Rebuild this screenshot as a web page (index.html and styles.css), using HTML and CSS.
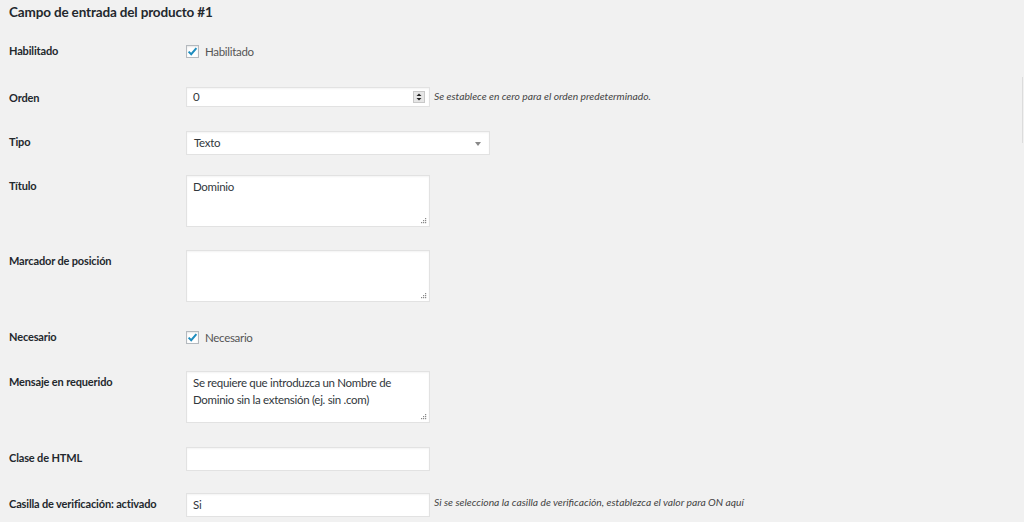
FILE: index.html
```html
<!DOCTYPE html>
<html lang="es">
<head>
<meta charset="utf-8">
<title>Campo de entrada del producto #1</title>
<link rel="stylesheet" href="styles.css">
</head>
<body>
<div class="wrap">
  <h2 class="title">Campo de entrada del producto #1</h2>
  <div class="form">
    <div class="row row-check">
      <div class="label">Habilitado</div>
      <div class="field">
        <span class="checkbox"><svg viewBox="0 0 13 13" width="13" height="13"><path d="M2.6 6.6 L5.2 9.2 L10.4 3.2" fill="none" stroke="#1e8cbe" stroke-width="2"/></svg></span>
        <span class="check-text">Habilitado</span>
      </div>
    </div>
    <div class="row">
      <div class="label">Orden</div>
      <div class="field">
        <div class="input input-number">0<span class="spinner"><svg viewBox="0 0 12 12" width="12" height="12"><rect x="0.5" y="0.5" width="11" height="11" fill="#e6e6e6" stroke="#c8c8c8"/><path d="M3.5 5 L6 2.5 L8.5 5 Z M3.5 7 L6 9.5 L8.5 7 Z" fill="#222"/></svg></span></div>
        <span class="desc">Se establece en cero para el orden predeterminado.</span>
      </div>
    </div>
    <div class="row">
      <div class="label">Tipo</div>
      <div class="field">
        <div class="input select">Texto<span class="arrow"></span></div>
      </div>
    </div>
    <div class="row">
      <div class="label">Título</div>
      <div class="field">
        <div class="input textarea">Dominio<span class="grip"><svg viewBox="0 0 6 6" width="6" height="6"><rect x="4" y="0" width="1.2" height="1.2" fill="#888"/><rect x="2" y="2" width="1.2" height="1.2" fill="#888"/><rect x="4" y="2" width="1.2" height="1.2" fill="#888"/><rect x="0" y="4" width="1.2" height="1.2" fill="#888"/><rect x="2" y="4" width="1.2" height="1.2" fill="#888"/><rect x="4" y="4" width="1.2" height="1.2" fill="#888"/></svg></span></div>
      </div>
    </div>
    <div class="row">
      <div class="label">Marcador de posición</div>
      <div class="field">
        <div class="input textarea"><span class="grip"><svg viewBox="0 0 6 6" width="6" height="6"><rect x="4" y="0" width="1.2" height="1.2" fill="#888"/><rect x="2" y="2" width="1.2" height="1.2" fill="#888"/><rect x="4" y="2" width="1.2" height="1.2" fill="#888"/><rect x="0" y="4" width="1.2" height="1.2" fill="#888"/><rect x="2" y="4" width="1.2" height="1.2" fill="#888"/><rect x="4" y="4" width="1.2" height="1.2" fill="#888"/></svg></span></div>
      </div>
    </div>
    <div class="row row-check">
      <div class="label">Necesario</div>
      <div class="field">
        <span class="checkbox"><svg viewBox="0 0 13 13" width="13" height="13"><path d="M2.6 6.6 L5.2 9.2 L10.4 3.2" fill="none" stroke="#1e8cbe" stroke-width="2"/></svg></span>
        <span class="check-text">Necesario</span>
      </div>
    </div>
    <div class="row">
      <div class="label">Mensaje en requerido</div>
      <div class="field">
        <div class="input textarea">Se requiere que introduzca un Nombre de<br>Dominio sin la extensión (ej. sin .com)<span class="grip"><svg viewBox="0 0 6 6" width="6" height="6"><rect x="4" y="0" width="1.2" height="1.2" fill="#888"/><rect x="2" y="2" width="1.2" height="1.2" fill="#888"/><rect x="4" y="2" width="1.2" height="1.2" fill="#888"/><rect x="0" y="4" width="1.2" height="1.2" fill="#888"/><rect x="2" y="4" width="1.2" height="1.2" fill="#888"/><rect x="4" y="4" width="1.2" height="1.2" fill="#888"/></svg></span></div>
      </div>
    </div>
    <div class="row">
      <div class="label">Clase de HTML</div>
      <div class="field">
        <div class="input input-text"></div>
      </div>
    </div>
    <div class="row">
      <div class="label">Casilla de verificación: activado</div>
      <div class="field">
        <div class="input input-text">Si</div>
        <span class="desc">Si se selecciona la casilla de verificación, establezca el valor para ON aquí</span>
      </div>
    </div>
  </div>
</div>
<div class="edge-line"></div>
</body>
</html>
```
FILE: styles.css
```css
* { box-sizing: border-box; }
html, body { margin: 0; padding: 0; }
body {
  background: #f1f1f1;
  font-family: Lato, "Open Sans", sans-serif;
  color: #32373c;
  width: 1024px;
  height: 522px;
  overflow: hidden;
}
.wrap { padding-left: 9px; }
.title {
  margin: 2px 0 4px;
  font-size: 13.5px;
  letter-spacing: -0.15px;
  line-height: 20px;
  font-weight: 700;
  color: #23282d;
}
.row {
  display: grid;
  grid-template-columns: 177px 1fr;
  align-items: start;
  padding-top: 12px;
}
.row:nth-child(1) { height: 49px; }
.row:nth-child(2) { height: 44px; }
.row:nth-child(3) { height: 44px; }
.row:nth-child(4) { height: 75px; }
.row:nth-child(5) { height: 74px; }
.row:nth-child(6) { height: 47px; }
.row:nth-child(7) { height: 76px; }
.row:nth-child(8) { height: 46px; }
.label {
  font-size: 11px;
  letter-spacing: -0.15px;
  font-weight: 700;
  line-height: 20px;
  padding-top: 1px;
  color: #23282d;
  white-space: nowrap;
}
.field { display: flex; align-items: flex-start; }
.row-check { align-items: center; grid-template-rows: 26px; }
.row-check .label { padding-top: 0; }
.row-check .field { align-items: center; height: 26px; }
.checkbox {
  width: 13px; height: 13px;
  border: 1px solid #b4b9be;
  background: #fff;
  box-shadow: inset 0 1px 2px rgba(0,0,0,.1);
  position: relative;
}
.checkbox svg { position: absolute; left: -1px; top: -1px; }
.check-text { margin-left: 6px; font-size: 11.5px; letter-spacing: -0.3px; color: #555; }
.input {
  background: #fff;
  border: 1px solid #e2e2e2;
  box-shadow: inset 0 1px 2px rgba(0,0,0,.05);
  font-size: 11.5px;
  letter-spacing: -0.3px;
  color: #32373c;
  position: relative;
  white-space: nowrap;
}
.input-number {
  width: 244px; height: 20px;
  line-height: 18px;
  padding: 0 6px;
}
.spinner { position: absolute; right: 4px; top: 3px; line-height: 0; }
.input-text {
  width: 244px; height: 24px;
  line-height: 22px;
  padding: 0 6px;
}
.select {
  width: 304px; height: 24px;
  line-height: 22px;
  padding: 0 7px;
}
.arrow {
  position: absolute;
  right: 8px; top: 10px;
  width: 0; height: 0;
  border-left: 3px solid transparent;
  border-right: 3px solid transparent;
  border-top: 4px solid #888;
}
.textarea {
  width: 244px; height: 52px;
  line-height: 17px;
  padding: 2px 6px;
}
.grip { position: absolute; right: 2px; bottom: 2px; line-height: 0; }
.desc {
  font-size: 10.3px;
  font-style: italic;
  color: #444;
  margin-left: 4px;
  margin-top: 2px;
  line-height: 14px;
  white-space: nowrap;
}
.edge-line {
  position: fixed;
  left: 1022px; top: 77px;
  width: 1px; height: 66px;
  background: #dcdcdc;
}
```
